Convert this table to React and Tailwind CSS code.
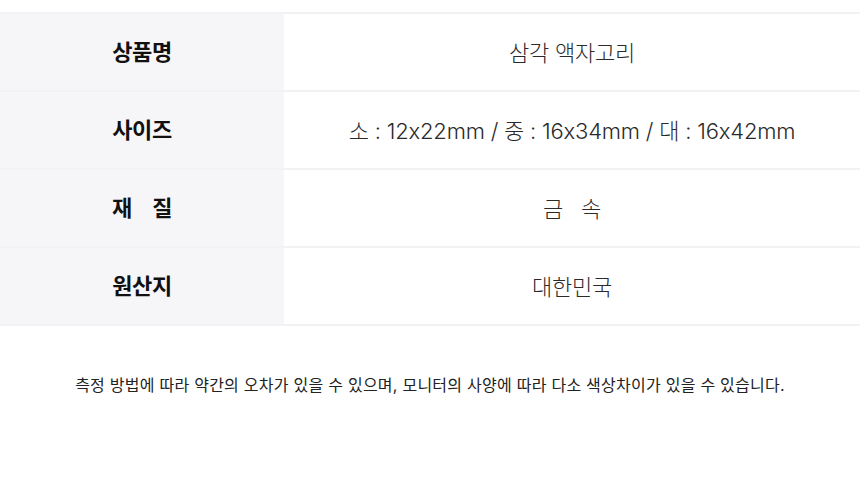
export default function App() {
  const rows = [
    { label: "상품명", value: "삼각 액자고리" },
    { label: "사이즈", value: "소 : 12x22mm / 중 : 16x34mm / 대 : 16x42mm" },
    { label: null, value: "금\u00a0\u00a0\u00a0속" },
    { label: "원산지", value: "대한민국" },
  ];
  return (
    <div
      className="w-[860px] h-[494px] bg-white pt-[12px]"
      style={{ fontFamily: "Inter, 'Noto Sans CJK KR', sans-serif" }}
    >
      <div className="border-t-2 border-[#f2f2f4]">
        {rows.map((r, i) => (
          <div key={i} className="flex h-[78px] border-b-2 border-[#f2f2f4]">
            <div className="w-[284px] bg-[#f6f6f8] flex items-center justify-center text-[22px] font-bold text-[#111] tracking-[-0.4px]">
              {r.label ?? (
                <span className="flex w-[60px] justify-between">
                  <span>재</span>
                  <span>질</span>
                </span>
              )}
            </div>
            <div className="flex-1 flex items-center justify-center pt-[2px] text-[22px] font-light text-[#2a2a2a] tracking-[-0.2px]">
              {r.value}
            </div>
          </div>
        ))}
      </div>
      <div className="mt-[47px] text-center text-[16px] text-[#222] tracking-[0.25px]">
        측정 방법에 따라 약간의 오차가 있을 수 있으며, 모니터의 사양에 따라 다소 색상차이가 있을 수 있습니다.
      </div>
    </div>
  );
}
